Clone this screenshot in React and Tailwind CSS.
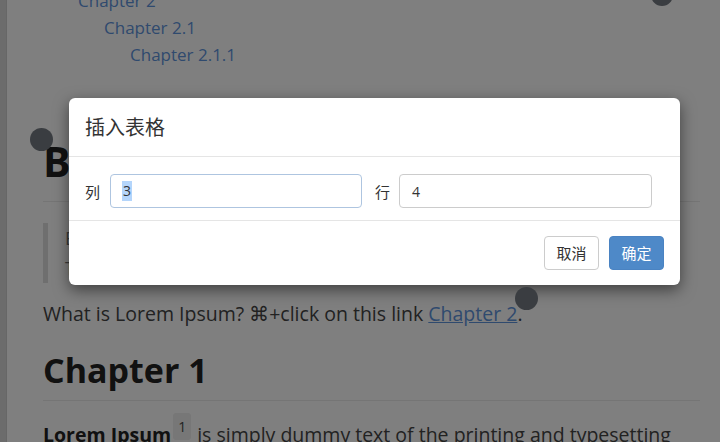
export default function App() {
  return (
    <div className="relative w-[720px] h-[442px] overflow-hidden bg-white font-['Open_Sans',sans-serif]">
      <div className="flex h-full">
        <div className="w-[7px] shrink-0 bg-[#d8d8d8] border-r border-[#cfcfcf]" />
        <div className="flex-1 pl-[36px] pr-[20px]">
          <ul className="-mt-[13px] pl-[35px] text-[17px] leading-[27px] text-[#5f94dc]">
            <li>Chapter 2</li>
            <li className="pl-[26px]">Chapter 2.1</li>
            <li className="pl-[52px]">Chapter 2.1.1</li>
          </ul>
          <h1 className="mt-[66px] pb-[12px] border-b border-[#eaeaea] text-[41px] leading-[55px] font-bold text-[#222]">
            Blockquotes
          </h1>
          <blockquote className="mt-[21px] h-[60px] border-l-[5px] border-[#dedede] pl-[17px] text-[18px] leading-[30px] text-[#777]">
            <p>Blockquotes are very handy in email to emulate reply text.</p>
            <p>This line is part of the same quote.</p>
          </blockquote>
          <p className="mt-[16px] text-[19.5px] leading-[30px] text-[#444]">
            What is Lorem Ipsum? ⌘+click on this link{" "}
            <span className="text-[#5f94dc] underline">Chapter 2</span>.
          </p>
          <h2 className="mt-[18px] pb-[6px] border-b border-[#eaeaea] text-[34px] leading-[47px] font-bold text-[#222]">
            Chapter 1
          </h2>
          <p className="mt-[19px] text-[19.5px] leading-[30px] text-[#444] whitespace-nowrap">
            <strong className="text-[#222]">Lorem Ipsum</strong>
            <sup className="ml-[2px] mr-[6px] px-[5px] py-[4px] rounded-[3px] bg-[#eeeeee] text-[14px] top-[-0.7em]">1</sup>
            is simply dummy text of the printing and typesetting
          </p>
        </div>
      </div>

      <div className="absolute inset-0 bg-black/50" />

      <div className="absolute left-[69px] top-[98px] w-[611px] rounded-[6px] bg-white shadow-[0_5px_15px_rgba(0,0,0,0.5)] font-['Noto_Sans_CJK_SC',sans-serif] text-[#333]">
        <div className="h-[59px] flex items-center px-4 border-b border-[#e5e5e5]">
          <span className="text-[20px]">插入表格</span>
        </div>
        <div className="flex items-center px-4 pt-[17px] pb-3">
          <span className="text-[15px] w-[15px] leading-none">列</span>
          <div className="ml-[10px] w-[252px] h-[34px] flex items-center pl-[11px] border border-[#aec5e0] rounded-[4px] text-[14px] font-['Open_Sans',sans-serif]">
            <span className="bg-[#b4d5fb] px-[1px] leading-[20px]">3</span>
          </div>
          <span className="ml-[13px] text-[15px] w-[15px] leading-none">行</span>
          <div className="ml-[9px] w-[253px] h-[34px] flex items-center pl-[12px] border border-[#cccccc] rounded-[4px] text-[14px] font-['Open_Sans',sans-serif]">
            4
          </div>
        </div>
        <div className="flex justify-end gap-[10px] px-4 pt-[15px] pb-[15px] border-t border-[#e5e5e5]">
          <button className="w-[55px] h-[34px] rounded-[4px] border border-[#cccccc] bg-white text-[15px] text-[#333]">
            取消
          </button>
          <button className="w-[55px] h-[34px] rounded-[4px] border border-[#4a83c2] bg-[#4e89c8] text-[15px] text-white">
            确定
          </button>
        </div>
      </div>

      <div className="absolute left-[30px] top-[128px] w-[23px] h-[23px] rounded-full bg-[#3a3d41]" />
      <div className="absolute left-[515px] top-[287px] w-[23px] h-[23px] rounded-full bg-[#3a3d41]" />
      <div className="absolute left-[651px] top-[-16px] w-[22px] h-[22px] rounded-full bg-[#3a3d41]" />
    </div>
  );
}
